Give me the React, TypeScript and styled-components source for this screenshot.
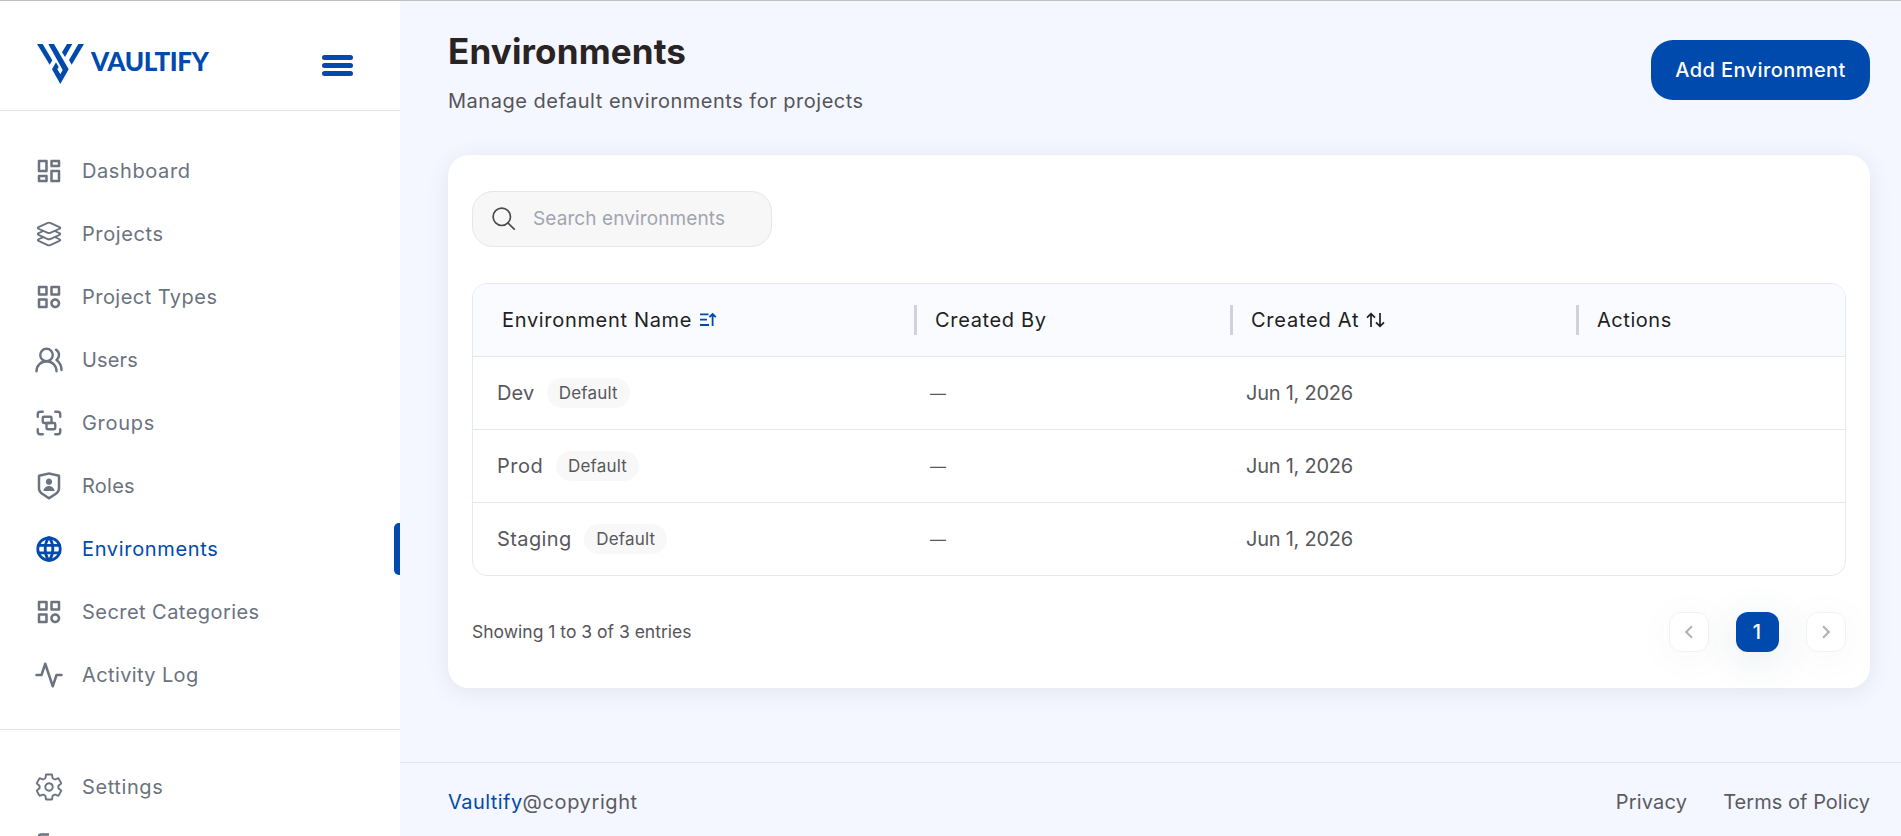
import React from 'react';
import styled, { createGlobalStyle, css } from 'styled-components';
import { RiDashboardLine, RiShieldUserLine } from 'react-icons/ri';
import { BiCategory } from 'react-icons/bi';
import { IoLayersOutline, IoSettingsOutline } from 'react-icons/io5';
import { TbWorld } from 'react-icons/tb';
import { FiActivity } from 'react-icons/fi';
import { MdChevronLeft, MdChevronRight } from 'react-icons/md';
import { UsersRound, Group } from 'lucide-react';

const blue = '#004aad';
const sans = "Inter, 'Open Sans', sans-serif";

const GlobalStyle = createGlobalStyle`
  *, *::before, *::after { box-sizing: border-box; }
  body { margin: 0; background: #f4f7ff; font-family: ${sans}; }
`;

const Page = styled.div`
  display: flex;
  height: 836px;
  overflow: hidden;
  border-top: 1px solid #c0c0c2;
`;

const Text = styled.span<{ $track?: number }>`
  letter-spacing: ${({ $track = 0 }) => $track}px;
  white-space: nowrap;
`;

/* Sidebar */

const Sidebar = styled.aside`
  flex: 0 0 400px;
  background: #fff;
  overflow: hidden;
`;

const Brand = styled.div`
  display: flex;
  align-items: center;
  justify-content: space-between;
  height: 110px;
  padding: 17px 47px 0 37px;
  border-bottom: 1px solid #e5e5e7;
`;

const Logo = styled.div`
  display: flex;
  align-items: center;
  gap: 7px;
  color: ${blue};
`;

const LogoName = styled.span`
  padding-bottom: 6px;
  font: 900 26px/30px Lato, ${sans};
  letter-spacing: -0.4px;
`;

const MenuButton = styled.button`
  display: flex;
  flex-direction: column;
  gap: 3.6px;
  width: 31px;
  padding: 3px 0 0;
  border: 0;
  background: none;
`;

const MenuBar = styled.span`
  height: 4.5px;
  border-radius: 3px;
  background: ${blue};
`;

const Nav = styled.nav<{ $divided?: boolean }>`
  display: flex;
  flex-direction: column;
  gap: 11px;
  padding: 34px 0 28px;
  ${({ $divided }) => $divided && css`
    padding-top: 31px;
    border-top: 1px solid #e5e5e7;
  `}
`;

const NavItem = styled.a<{ $active?: boolean }>`
  display: flex;
  align-items: center;
  gap: 18px;
  flex: 0 0 52px;
  padding-left: 34px;
  font-size: 20px;
  line-height: 28px;
  color: ${({ $active }) => ($active ? blue : '#6b7280')};
  ${({ $active }) => $active && css`
    &::after {
      content: '';
      width: 6px;
      height: 52px;
      margin-left: auto;
      border-radius: 5px 0 0 5px;
      background: ${blue};
    }
  `}
`;

/* Main column */

const Main = styled.main`
  flex: 1;
  display: flex;
  flex-direction: column;
`;

const Content = styled.div`
  flex: 0 0 761px;
  padding: 0 31px 0 48px;
`;

const PageHeader = styled.header`
  display: flex;
  justify-content: space-between;
  align-items: flex-start;
  height: 154px;
`;

const Title = styled.h1`
  margin: 28px 0 0;
  font-size: 35px;
  line-height: 44px;
  font-weight: 700;
  letter-spacing: 0.15px;
  color: #292324;
`;

const Subtitle = styled.p`
  margin: 14px 0 0;
  font-size: 20px;
  line-height: 28px;
  color: #555559;
`;

const AddButton = styled.button`
  width: 219px;
  height: 60px;
  margin-top: 39px;
  padding: 0;
  border: 0;
  border-radius: 22px;
  background: ${blue};
  color: #fff;
  font: 500 20px/28px ${sans};
`;

const Card = styled.section`
  height: 533px;
  padding: 36px 24px 0;
  border-radius: 21px;
  background: #fff;
  box-shadow: 0 4px 24px rgba(20, 20, 40, 0.08);
`;

const SearchBox = styled.label`
  display: flex;
  align-items: center;
  gap: 17px;
  width: 300px;
  height: 56px;
  padding-left: 19px;
  border: 1px solid #e6e6e8;
  border-radius: 21px;
  background: #f7f7f7;
`;

const SearchInput = styled.input`
  width: 210px;
  padding: 0;
  border: 0;
  outline: 0;
  background: none;
  font: 400 19px/28px ${sans};
  letter-spacing: 0.1px;
  &::placeholder { color: #a0a5b1; opacity: 1; }
`;

const Table = styled.div`
  margin-top: 36px;
  border: 1px solid #e4e9f5;
  border-radius: 15px;
  overflow: hidden;
`;

const Row = styled.div<{ $head?: boolean }>`
  display: grid;
  grid-template-columns: 433px 316px 346px 1fr;
  align-items: center;
  height: 73px;
  font-size: 20px;
  line-height: 28px;
  color: #58585c;
  & + & { border-top: 1px solid #e1e7f5; }
  ${({ $head }) => $head && css`
    height: 72px;
    background: #fafbfe;
    color: #231e1f;
  `}
`;

const HeadCell = styled.div<{ $first?: boolean }>`
  display: flex;
  align-items: center;
  gap: 7px;
  padding-left: ${({ $first }) => ($first ? 29 : 8)}px;
  ${({ $first }) => !$first && css`
    &::before {
      content: '';
      width: 3px;
      height: 30px;
      margin-right: 11px;
      background: #d0d1da;
    }
  `}
`;

const Cell = styled.div`
  display: flex;
  align-items: center;
  gap: 12.5px;
  padding-left: 24px;
`;

const Empty = styled.span`
  font-size: 16px;
  line-height: 28px;
`;

const Badge = styled.span`
  height: 30px;
  padding: 0 12px;
  border-radius: 15px;
  background: #f8f8f8;
  font-size: 17px;
  line-height: 30.5px;
  letter-spacing: 0.2px;
`;

const TableFooter = styled.div`
  display: flex;
  justify-content: space-between;
  align-items: center;
  height: 40px;
  margin-top: 36px;
  font-size: 17.5px;
  color: #555559;
`;

const Entries = styled.span`
  padding-bottom: 2px;
`;

const Pager = styled.div`
  display: flex;
  gap: 27px;
`;

const PageButton = styled.button<{ $current?: boolean }>`
  display: flex;
  align-items: center;
  justify-content: center;
  width: 40px;
  height: 40px;
  padding: 0 1px 0 0;
  border: 1px solid #f0f2fa;
  border-radius: 12px;
  background: #fff;
  color: #b3b3b3;
  box-shadow: 0 5px 44px rgba(20, 60, 80, 0.045);
  ${({ $current }) => $current && css`
    width: 43px;
    border: 0;
    background: ${blue};
    color: #fff;
    font: 500 20px/28px ${sans};
    box-shadow: 0 8px 40px rgba(20, 70, 100, 0.12);
  `}
`;

const Footer = styled.footer`
  display: flex;
  flex: 0 0 78px;
  align-items: center;
  justify-content: space-between;
  padding: 0 31px 0 48px;
  border-top: 1px solid #e1e5ed;
  font-size: 20px;
  line-height: 28px;
  color: #5b5b5f;
`;

const FooterBrand = styled.span`
  color: ${blue};
  letter-spacing: 0.45px;
`;

const FooterLinks = styled.div`
  display: flex;
  gap: 36px;
`;

/* Drawings */

const LogoMark = () => (
  <svg width="47" height="40" viewBox="111 132 141 120" fill="currentColor">
    <path d="M111 132H128L157 181L149 194Z" />
    <path d="M145 132H162L206 208L181 252L156 208L168 187L176 201L172 208L181 223L188 210Z" />
    <path d="M201 132H217L195 171L186 157Z" />
    <path d="M235 132H252L215 194L207 180Z" />
  </svg>
);

const SearchIcon = () => (
  <svg width="24" height="24" viewBox="0 0 24 24" fill="none" stroke="#4b4b4f" strokeWidth="1.7" strokeLinecap="round">
    <circle cx="9.8" cy="9.8" r="8.7" />
    <path d="M16 16L22.2 22.2" />
  </svg>
);

const SortedIcon = () => (
  <svg width="18" height="16" viewBox="0 0 18 16" fill="none" stroke={blue} strokeWidth="1.8">
    <path d="M1 2.4H9.5M1 7.6H8M1 13H10M13.6 14V2.2M10.4 5.2L13.6 2L16.8 5.2" />
  </svg>
);

const SortIcon = () => (
  <svg width="19" height="16" viewBox="0 0 19 16" fill="none" stroke="currentColor" strokeWidth="1.7">
    <path d="M5 15V2M1 5.6L5 1.6L9 5.6M14 1V14M10 10.4L14 14.4L18 10.4" />
  </svg>
);

const LogoutIcon = () => (
  <svg width="30" height="34" viewBox="0 0 30 34" fill="none" stroke="currentColor" strokeWidth="2.5">
    <path d="M15 1.5H7Q5 1.5 5 3.5V30.5Q5 32.5 7 32.5H15M12 17H27M21 11L27 17L21 23" />
  </svg>
);

const links = [
  { label: 'Dashboard', track: 0.6, icon: <RiDashboardLine size={30} /> },
  { label: 'Projects', track: 0.6, icon: <IoLayersOutline size={30} /> },
  { label: 'Project Types', track: 0.46, icon: <BiCategory size={30} /> },
  { label: 'Users', track: 0.15, icon: <UsersRound size={30} strokeWidth={1.9} /> },
  { label: 'Groups', track: 0.7, icon: <Group size={30} strokeWidth={1.9} /> },
  { label: 'Roles', track: 0.25, icon: <RiShieldUserLine size={30} /> },
  { label: 'Environments', track: 0.66, icon: <TbWorld size={30} strokeWidth={2.2} />, active: true },
  { label: 'Secret Categories', track: 0.45, icon: <BiCategory size={30} /> },
  { label: 'Activity Log', track: 0.38, icon: <FiActivity size={30} /> },
];

const rows = [
  { name: 'Dev', track: 0.1 },
  { name: 'Prod', track: 0.55 },
  { name: 'Staging', track: 0.4 },
];

export default function App() {
  return (
    <Page>
      <GlobalStyle />
      <Sidebar>
        <Brand>
          <Logo>
            <LogoMark />
            <LogoName>VAULTIFY</LogoName>
          </Logo>
          <MenuButton aria-label="Menu">
            <MenuBar />
            <MenuBar />
            <MenuBar />
          </MenuButton>
        </Brand>
        <Nav>
          {links.map(({ label, track, icon, active }) => (
            <NavItem key={label} $active={active}>
              {icon}
              <Text $track={track}>{label}</Text>
            </NavItem>
          ))}
        </Nav>
        <Nav $divided>
          <NavItem>
            <IoSettingsOutline size={30} />
            <Text $track={0.6}>Settings</Text>
          </NavItem>
          <NavItem aria-label="Log out">
            <LogoutIcon />
          </NavItem>
        </Nav>
      </Sidebar>
      <Main>
        <Content>
          <PageHeader>
            <div>
              <Title>Environments</Title>
              <Subtitle>
                <Text $track={0.51}>Manage default environments for projects</Text>
              </Subtitle>
            </div>
            <AddButton>
              <Text $track={0.42}>Add Environment</Text>
            </AddButton>
          </PageHeader>
          <Card>
            <SearchBox>
              <SearchIcon />
              <SearchInput placeholder="Search environments" />
            </SearchBox>
            <Table>
              <Row $head>
                <HeadCell $first>
                  <Text $track={0.68}>Environment Name</Text>
                  <SortedIcon />
                </HeadCell>
                <HeadCell>
                  <Text $track={0.66}>Created By</Text>
                </HeadCell>
                <HeadCell>
                  <Text $track={0.75}>Created At</Text>
                  <SortIcon />
                </HeadCell>
                <HeadCell>
                  <Text $track={0.55}>Actions</Text>
                </HeadCell>
              </Row>
              {rows.map(({ name, track }) => (
                <Row key={name}>
                  <Cell>
                    <Text $track={track}>{name}</Text>
                    <Badge>Default</Badge>
                  </Cell>
                  <Cell>
                    <Empty>—</Empty>
                  </Cell>
                  <Cell>
                    <Text $track={-0.25}>Jun 1, 2026</Text>
                  </Cell>
                  <Cell />
                </Row>
              ))}
            </Table>
            <TableFooter>
              <Entries>Showing 1 to 3 of 3 entries</Entries>
              <Pager>
                <PageButton aria-label="Previous">
                  <MdChevronLeft size={26} />
                </PageButton>
                <PageButton $current>1</PageButton>
                <PageButton aria-label="Next">
                  <MdChevronRight size={26} />
                </PageButton>
              </Pager>
            </TableFooter>
          </Card>
        </Content>
        <Footer>
          <div>
            <FooterBrand>Vaultify</FooterBrand>
            <Text $track={0.6}>@copyright</Text>
          </div>
          <FooterLinks>
            <Text $track={0.2}>Privacy</Text>
            <Text $track={0.04}>Terms of Policy</Text>
          </FooterLinks>
        </Footer>
      </Main>
    </Page>
  );
}
